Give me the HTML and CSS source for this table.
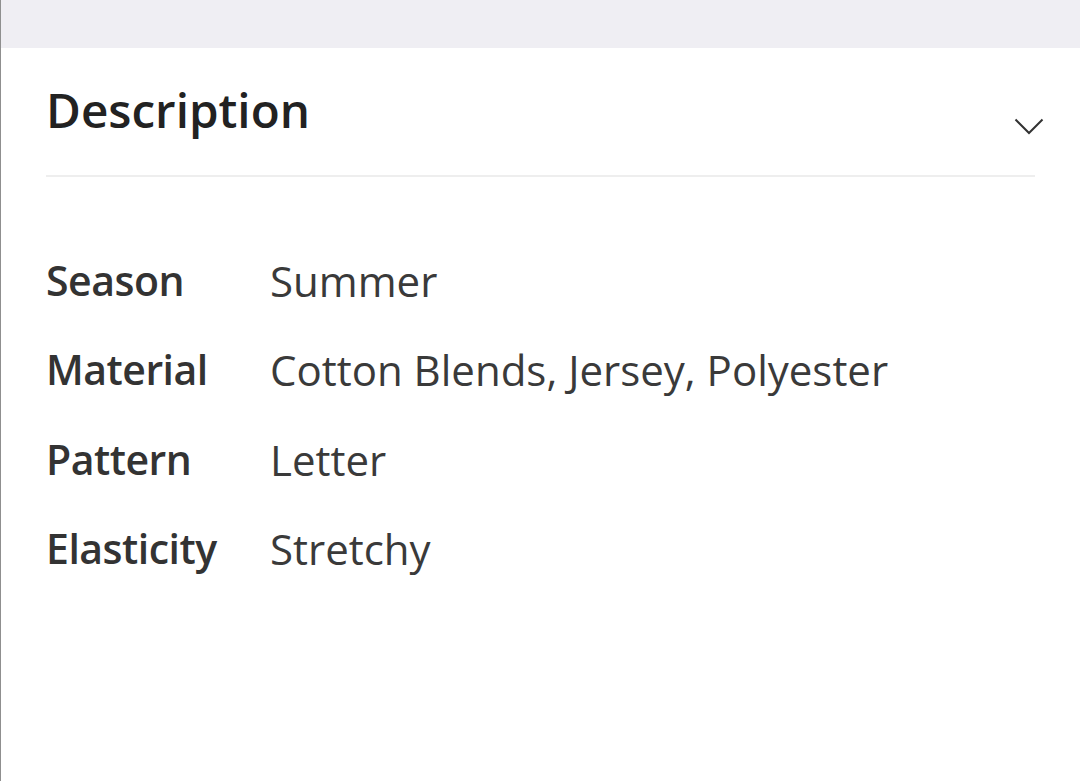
FILE: index.html
```html
<!DOCTYPE html>
<html>
<head>
<meta charset="utf-8">
<link rel="stylesheet" href="styles.css">
</head>
<body>
<div class="page">
  <div class="topbar"></div>
  <section class="panel">
    <header class="panel-head">
      <h2 class="title">Description</h2>
      <svg class="chevron" width="30" height="17" viewBox="0 0 30 17" aria-hidden="true">
        <path d="M1.5 1.5 L15 15 L28.5 1.5" fill="none" stroke="#333" stroke-width="2"/>
      </svg>
    </header>
    <dl class="specs">
      <dt>Season</dt><dd>Summer</dd>
      <dt>Material</dt><dd>Cotton Blends, Jersey, Polyester</dd>
      <dt>Pattern</dt><dd>Letter</dd>
      <dt>Elasticity</dt><dd>Stretchy</dd>
    </dl>
  </section>
</div>
</body>
</html>
```

FILE: styles.css
```css
html, body {
  margin: 0;
  padding: 0;
  background: #ffffff;
}
body {
  font-family: "Open Sans", "Noto Sans", sans-serif;
  color: #333333;
}
.page {
  width: 1080px;
  height: 781px;
  box-sizing: border-box;
  border-left: 1px solid #8f8f8f;
  overflow: hidden;
}
.topbar {
  height: 48px;
  background: #efeef3;
}
.panel {
  padding: 0 45px 0 45px;
}
.panel-head {
  display: flex;
  justify-content: space-between;
  align-items: flex-start;
  padding-top: 29px;
  padding-bottom: 33px;
  border-bottom: 2px solid #eeeeee;
}
.title {
  margin: 0;
  font-size: 47.6px;
  font-weight: 600;
  line-height: 65px;
  color: #222222;
  letter-spacing: 0;
}
.chevron {
  margin-top: 41px;
  margin-right: -9px;
  flex: none;
}
.specs {
  margin: 0;
  padding-top: 59px;
  display: grid;
  grid-template-columns: 224px 1fr;
  font-size: 42px;
  line-height: 89.3px;
}
.specs dt {
  font-size: 41px;
  font-weight: 600;
  color: #333333;
  letter-spacing: -0.5px;
}
.specs dd {
  margin: 0;
  color: #3a3a3a;
}
```
